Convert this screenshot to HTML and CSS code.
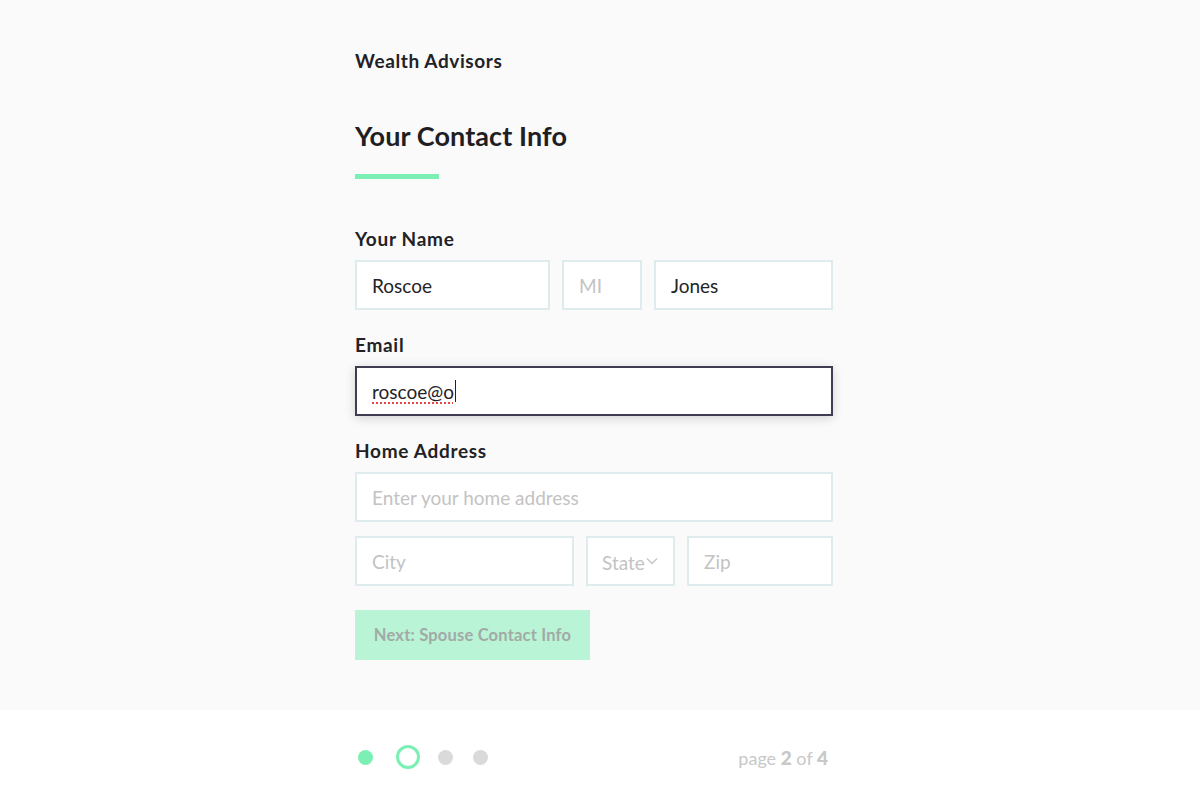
FILE: index.html
```html
<!DOCTYPE html>
<html lang="en">
<head>
<meta charset="utf-8">
<title>Your Contact Info</title>
<link rel="stylesheet" href="styles.css">
</head>
<body>
<main class="page">
  <div class="container">
    <div class="brand">Wealth Advisors</div>
    <h1 class="title">Your Contact Info</h1>
    <div class="title-bar"></div>

    <div class="group first">
      <div class="label">Your Name</div>
      <div class="row row-name">
        <div class="field"><span class="value">Roscoe</span></div>
        <div class="field"><span class="placeholder">MI</span></div>
        <div class="field"><span class="value">Jones</span></div>
      </div>
    </div>

    <div class="group">
      <div class="label">Email</div>
      <div class="field focused"><span class="value misspelled">roscoe@o</span><span class="caret"></span></div>
    </div>

    <div class="group">
      <div class="label">Home Address</div>
      <div class="field"><span class="placeholder">Enter your home address</span></div>
      <div class="row row-city">
        <div class="field"><span class="placeholder">City</span></div>
        <div class="field select"><span class="placeholder">State</span><svg class="chevron" width="12" height="8" viewBox="0 0 12 8"><path d="M1 1.5 L6 6.5 L11 1.5" fill="none" stroke="#c4c4c4" stroke-width="1.3"/></svg></div>
        <div class="field"><span class="placeholder">Zip</span></div>
      </div>
    </div>

    <button class="next" type="button">Next: Spouse Contact Info</button>
  </div>
</main>
<footer class="footer">
  <div class="footer-inner">
    <div class="steps">
      <span class="dot done"></span>
      <span class="dot current"></span>
      <span class="dot todo"></span>
      <span class="dot todo last"></span>
    </div>
    <div class="pager">page <b>2</b> of <b>4</b></div>
  </div>
</footer>
</body>
</html>
```
FILE: styles.css
```css
* { box-sizing: border-box; }
html, body { margin: 0; padding: 0; }
body {
  background: #fafafa;
  font-family: "Lato", "Noto Sans", sans-serif;
  color: #222226;
}
.page {
  height: 710px;
  padding-top: 49px;
}
.container {
  width: 478px;
  margin: 0 auto 0 355px;
}
.brand {
  font-size: 19px;
  line-height: 24px;
  font-weight: 700;
  letter-spacing: 0.6px;
  color: #222226;
}
.title {
  margin: 47px 0 0;
  font-size: 27px;
  line-height: 32px;
  font-weight: 700;
  letter-spacing: 0.1px;
  color: #1f1f23;
}
.title-bar {
  margin-top: 22px;
  width: 84px;
  height: 5px;
  background: #7cefb4;
}
.group { margin-top: 23px; }
.group.first { margin-top: 48px; }
.label {
  font-size: 19px;
  line-height: 24px;
  font-weight: 700;
  letter-spacing: 0.7px;
  color: #222226;
  margin-bottom: 9px;
}
.field {
  height: 50px;
  background: #fff;
  border: 2px solid #dfeced;
  padding: 0 15px;
  display: flex;
  align-items: center;
  font-size: 19px;
}
.value { color: #232326; }
.placeholder { color: #c3c3c3; }
.row {
  display: grid;
  gap: 12px;
}
.row-name { grid-template-columns: 195px 80px 1fr; }
.row-city { grid-template-columns: 219px 89px 1fr; margin-top: 14px; }
.field.focused {
  border-color: #3e3d51;
  box-shadow: 0 2px 10px rgba(0, 0, 0, 0.16);
}
.misspelled {
  text-decoration: underline dotted #e84545;
  text-decoration-thickness: 2px;
  text-underline-offset: 4px;
}
.caret {
  display: inline-block;
  width: 1.5px;
  height: 22px;
  background: #222;
  margin-left: 1px;
}
.select { padding: 0 12px 0 14px; }
.select .placeholder { margin-top: 2px; }
.chevron { margin-left: 1px; }
.next {
  display: block;
  margin-top: 24px;
  width: 235px;
  height: 50px;
  border: 0;
  background: #b9f4d6;
  color: #a2aaa6;
  font-family: "Lato", "Noto Sans", sans-serif;
  font-size: 16.5px;
  font-weight: 700;
  letter-spacing: 0.2px;
  padding: 0;
  cursor: pointer;
}
.footer {
  background: #fff;
  height: 91px;
}
.footer-inner {
  width: 478px;
  margin-left: 355px;
  height: 91px;
  display: flex;
  align-items: center;
  justify-content: space-between;
  padding: 3px 5px 0 3px;
}
.steps {
  display: flex;
  align-items: center;
}
.dot {
  display: block;
  width: 15px;
  height: 15px;
  border-radius: 50%;
  margin-right: 23px;
}
.dot.done { background: #7cefb4; }
.dot.current {
  width: 24px;
  height: 24px;
  border: 3px solid #7cefb4;
  background: #fff;
  margin-right: 18px;
}
.dot.todo { background: #dadada; margin-right: 20px; }
.dot.last { margin-right: 0; }
.pager {
  font-size: 18px;
  color: #c8c8c8;
}
.pager b { font-weight: 900; font-size: 19px; }
```
